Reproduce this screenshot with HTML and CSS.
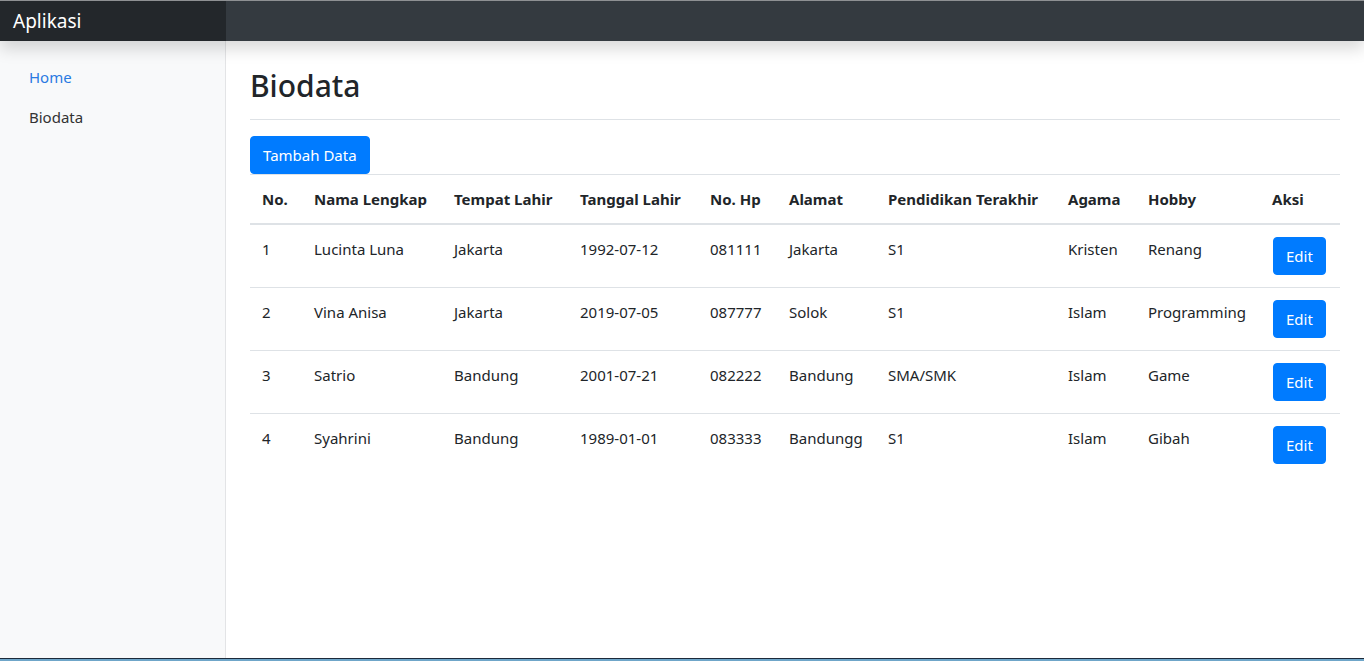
FILE: index.html
```html
<!DOCTYPE html>
<html lang="id">
<head>
<meta charset="utf-8">
<title>Aplikasi - Biodata</title>
<link rel="stylesheet" href="styles.css">
</head>
<body>
<div class="app">
  <header class="navbar">
    <a class="brand" href="#">Aplikasi</a>
  </header>
  <div class="body-row">
    <nav class="sidebar">
      <ul class="nav">
        <li><a class="nav-link active" href="#">Home</a></li>
        <li><a class="nav-link" href="#">Biodata</a></li>
      </ul>
    </nav>
    <main class="main">
      <div class="page-head">
        <h1 class="title">Biodata</h1>
      </div>
      <button class="btn">Tambah Data</button>
      <table class="table">
        <colgroup>
          <col class="c-no"><col class="c-nama"><col class="c-tempat"><col class="c-tgl"><col class="c-hp"><col class="c-alamat"><col class="c-pend"><col class="c-agama"><col class="c-hobby"><col class="c-aksi">
        </colgroup>
        <thead>
          <tr><th>No.</th><th>Nama Lengkap</th><th>Tempat Lahir</th><th>Tanggal Lahir</th><th>No. Hp</th><th>Alamat</th><th>Pendidikan Terakhir</th><th>Agama</th><th>Hobby</th><th>Aksi</th></tr>
        </thead>
        <tbody>
          <tr><td>1</td><td>Lucinta Luna</td><td>Jakarta</td><td>1992-07-12</td><td>081111</td><td>Jakarta</td><td>S1</td><td>Kristen</td><td>Renang</td><td><button class="btn">Edit</button></td></tr>
          <tr><td>2</td><td>Vina Anisa</td><td>Jakarta</td><td>2019-07-05</td><td>087777</td><td>Solok</td><td>S1</td><td>Islam</td><td>Programming</td><td><button class="btn">Edit</button></td></tr>
          <tr><td>3</td><td>Satrio</td><td>Bandung</td><td>2001-07-21</td><td>082222</td><td>Bandung</td><td>SMA/SMK</td><td>Islam</td><td>Game</td><td><button class="btn">Edit</button></td></tr>
          <tr><td>4</td><td>Syahrini</td><td>Bandung</td><td>1989-01-01</td><td>083333</td><td>Bandungg</td><td>S1</td><td>Islam</td><td>Gibah</td><td><button class="btn">Edit</button></td></tr>
        </tbody>
      </table>
    </main>
  </div>
</div>
<div class="taskbar"></div>
</body>
</html>
```
FILE: styles.css
```css
* { box-sizing: border-box; }
html, body { margin: 0; padding: 0; height: 100%; }
body {
  font-family: "Noto Sans", "Open Sans", sans-serif;
  font-size: 15px;
  line-height: 24px;
  color: #212529;
  background: #fff;
  overflow: hidden;
}
.app { display: flex; flex-direction: column; height: 100vh; }
.navbar {
  position: relative;
  z-index: 2;
  height: 41px;
  flex: 0 0 41px;
  display: flex;
  background: #343a40;
  border-top: 1px solid #8e9093;
  box-shadow: 0 8px 16px rgba(0,0,0,.15);
}
.brand {
  width: 226px;
  background: #23272b;
  color: #fff;
  text-decoration: none;
  font-size: 19px;
  line-height: 40px;
  padding-left: 13px;
}
.body-row { flex: 1; display: flex; min-height: 0; }
.sidebar {
  width: 226px;
  flex: 0 0 226px;
  background: #f8f9fa;
  border-right: 1px solid #e3e4e6;
  padding: 16px 0 0 13px;
}
.nav { list-style: none; margin: 0; padding: 0; }
.nav-link {
  display: block;
  padding: 8px 16px;
  color: #333;
  text-decoration: none;
  font-size: 15px;
}
.nav-link.active { color: #2a7ae2; }
.main { flex: 1; padding: 0 24px; }
.page-head {
  padding: 26px 0 14px;
  border-bottom: 1px solid #dee2e6;
  margin-bottom: 16px;
}
.title {
  margin: 0;
  font-size: 30px;
  font-weight: 500;
  line-height: 38px;
}
.btn {
  font-family: inherit;
  font-size: 15px;
  line-height: 24px;
  color: #fff;
  background: #007bff;
  border: 1px solid #007bff;
  border-radius: 4px;
  padding: 6px 12px;
  cursor: pointer;
  display: inline-block;
  vertical-align: top;
}
.table {
  width: 100%;
  border-collapse: collapse;
  table-layout: fixed;
}
.table th, .table td {
  padding: 12px;
  text-align: left;
  vertical-align: top;
  border-top: 1px solid #dee2e6;
  white-space: nowrap;
}
.table th { font-weight: 700; border-bottom: 2px solid #dee2e6; }
.c-no { width: 52px; }
.c-nama { width: 140px; }
.c-tempat { width: 126px; }
.c-tgl { width: 130px; }
.c-hp { width: 79px; }
.c-alamat { width: 99px; }
.c-pend { width: 180px; }
.c-agama { width: 80px; }
.c-hobby { width: 124px; }
.c-aksi { width: 80px; }
.table td:last-child { padding-left: 13px; }
.taskbar {
  position: fixed;
  left: 0; right: 0; bottom: 0;
  height: 3px;
  background: linear-gradient(#1c2a3a 0 1px, #6fa6c9 1px);
  z-index: 5;
}
```
